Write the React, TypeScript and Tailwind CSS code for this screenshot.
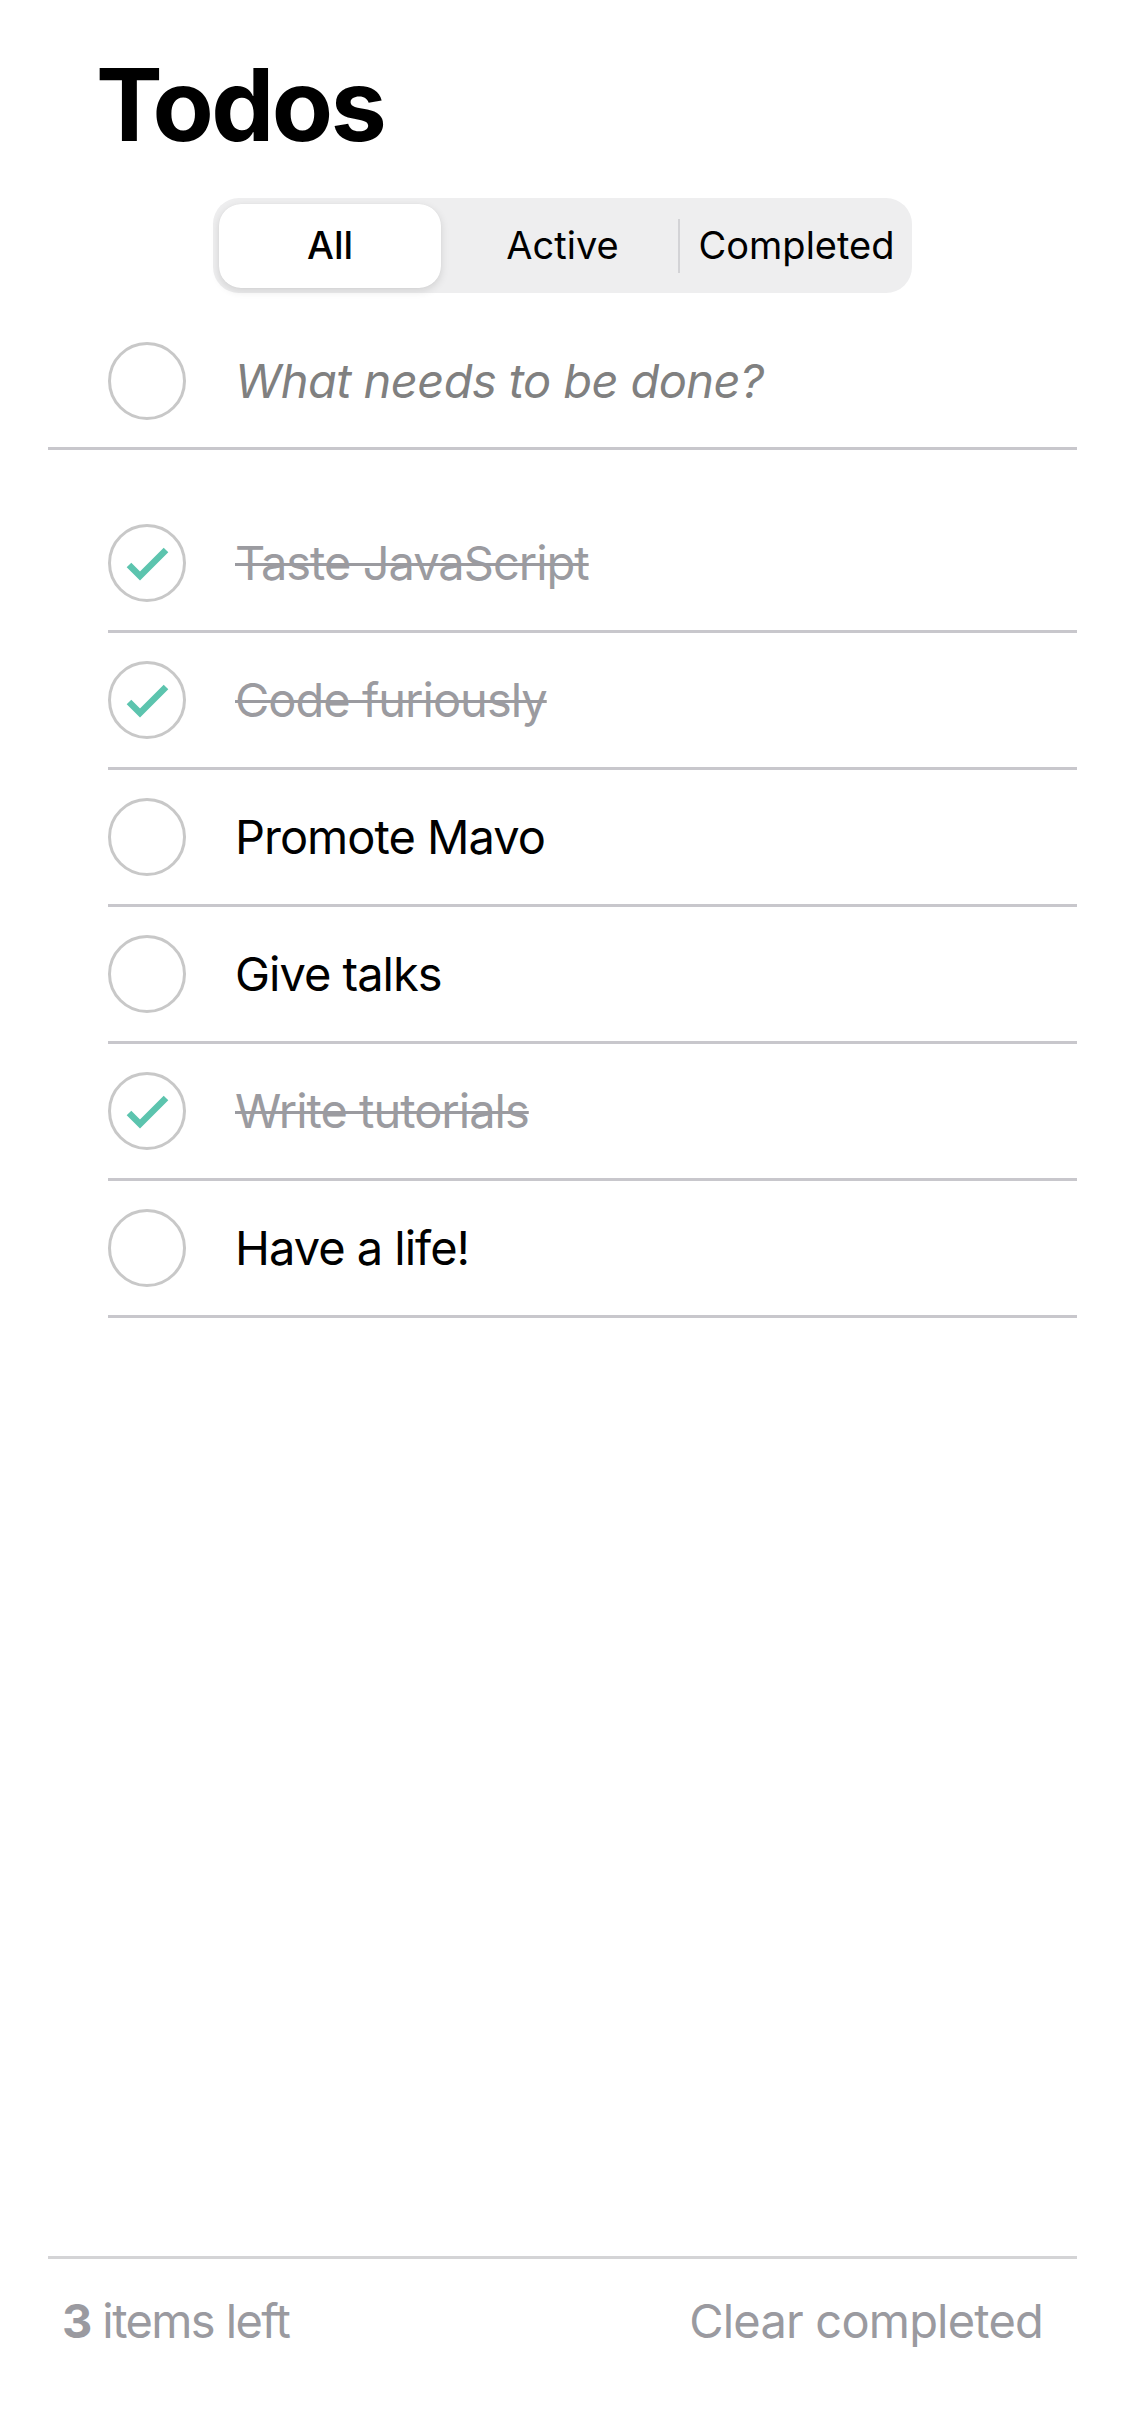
import React from "react";

type Todo = { text: string; done: boolean };

const todos: Todo[] = [
  { text: "Taste JavaScript", done: true },
  { text: "Code furiously", done: true },
  { text: "Promote Mavo", done: false },
  { text: "Give talks", done: false },
  { text: "Write tutorials", done: true },
  { text: "Have a life!", done: false },
];

function CheckCircle({ done }: { done: boolean }) {
  return (
    <div className="relative w-[78px] h-[78px] shrink-0 rounded-full border-[3px] border-[#c8c8c8]">
      {done && (
        <svg
          className="absolute left-[-3px] top-[-3px]"
          width="78"
          height="78"
          viewBox="0 0 78 78"
          fill="none"
        >
          <path
            d="M21 41 L32 52 L58 26"
            stroke="#5cc4ae"
            strokeWidth="6.5"
            strokeLinecap="butt"
            strokeLinejoin="miter"
          />
        </svg>
      )}
    </div>
  );
}

export default function App() {
  return (
    <div
      className="w-[1125px] h-[2436px] bg-white flex flex-col text-black"
      style={{ fontFamily: "Inter, 'Noto Sans', sans-serif" }}
    >
      <h1 className="mt-[55px] pl-[96px] text-[100px] leading-none font-bold tracking-[-2.5px]">
        Todos
      </h1>

      <div className="relative mt-[43px] self-center w-[699px] h-[95px] rounded-[26px] bg-[#eeeeef] p-[6px] flex items-center">
        <div className="w-[229px] h-full flex items-center">
          <div className="w-[222px] h-[84px] rounded-[22px] bg-white shadow-[0_3px_8px_rgba(0,0,0,0.12),0_0_1px_rgba(0,0,0,0.08)] flex items-center justify-center text-[38px] font-medium">
            All
          </div>
        </div>
        <div className="w-[229px] h-full flex items-center justify-center text-[38px]">
          Active
        </div>
        <div className="w-[229px] h-full flex items-center justify-center text-[38px] pl-[10px]">
          Completed
        </div>
        <div className="absolute left-[465px] top-[21px] w-[2px] h-[54px] bg-[#d3d3d6]" />
      </div>

      <div className="pt-[49px] pb-[27px] pl-[108px] flex items-center gap-[49px]">
        <CheckCircle done={false} />
        <span className="text-[47px] italic text-[#808080] tracking-[-0.6px]">
          What needs to be done?
        </span>
      </div>
      <div className="mx-[48px] h-[3px] bg-[#c8c7cc]" />

      <ul className="mt-[46px] pl-[108px] pr-[48px]">
        {todos.map((t) => (
          <li key={t.text} className="flex flex-col">
            <div className="h-[134px] flex items-center gap-[49px]">
              <CheckCircle done={t.done} />
              <span
                className={
                  t.done
                    ? "text-[47px] text-[#9b9ba0] line-through decoration-[3px] decoration-[#9b9ba0] tracking-[-1px]"
                    : "text-[47px] text-black tracking-[-1px]"
                }
              >
                {t.text}
              </span>
            </div>
            <div className="h-[3px] bg-[#c8c7cc]" />
          </li>
        ))}
      </ul>

      <div className="flex-1" />

      <div className="mx-[48px] h-[3px] bg-[#d4d4d6]" />
      <div className="h-[177px] pl-[62px] pr-[82px] flex items-start justify-between pt-[27px] text-[47px] text-[#9a9aa0]">
        <span className="tracking-[-1.6px]">
          <span className="font-bold">3</span> items left
        </span>
        <span className="tracking-[-0.8px]">Clear completed</span>
      </div>
    </div>
  );
}
